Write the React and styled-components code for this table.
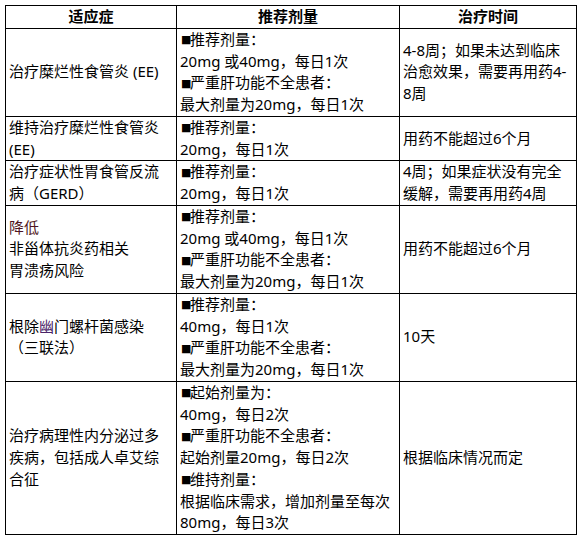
import React from "react";
import styled, { createGlobalStyle } from "styled-components";

const Global = createGlobalStyle`
  html, body { margin: 0; padding: 0; background: #fff; }
  body { font-family: "Noto Sans", "Noto Sans CJK SC", sans-serif; color: #000; }
`;

const Page = styled.div`
  padding: 5px;
`;

const Table = styled.div`
  display: grid;
  grid-template-columns: 170px 222px 176px;
  gap: 1px;
  padding: 1px;
  background: #000;
  width: max-content;
  font-size: 15px;
  line-height: 21.75px;
`;

const Cell = styled.div`
  background: #fff;
  display: flex;
  flex-direction: column;
  justify-content: center;
  align-items: ${(p) => (p.$head ? "center" : "flex-start")};
  padding: 0 3px;
  font-weight: ${(p) => (p.$head ? 700 : 400)};
  white-space: nowrap;
`;

const Line = styled.div`
  height: 21.75px;
  display: flex;
  align-items: center;
`;

const Bullet = styled.span`
  font-family: "DejaVu Sans", sans-serif;
  font-size: 11px;
  line-height: 1;
  display: inline-block;
  width: 9px;
  margin-left: 1px;
`;

const Tint = styled.span`
  color: ${(p) => p.$c};
`;

const rows = [
  {
    ind: ["治疗糜烂性食管炎 (EE)"],
    dose: ["■推荐剂量：", "20mg 或40mg，每日1次", "■严重肝功能不全患者：", "最大剂量为20mg，每日1次"],
    time: ["4-8周；如果未达到临床", "治愈效果，需要再用药4-", "8周"],
  },
  {
    ind: ["维持治疗糜烂性食管炎", "(EE)"],
    dose: ["■推荐剂量：", "20mg，每日1次"],
    time: ["用药不能超过6个月"],
  },
  {
    ind: ["治疗症状性胃食管反流", "病（GERD）"],
    dose: ["■推荐剂量：", "20mg，每日1次"],
    time: ["4周；如果症状没有完全", "缓解，需要再用药4周"],
  },
  {
    ind: [<Tint $c="#4e1420">降低</Tint>, "非甾体抗炎药相关", "胃溃疡风险"],
    dose: ["■推荐剂量：", "20mg 或40mg，每日1次", "■严重肝功能不全患者：", "最大剂量为20mg，每日1次"],
    time: ["用药不能超过6个月"],
  },
  {
    ind: [
      <span>
        根除<Tint $c="#4a2468">幽</Tint>门螺杆菌感染
      </span>,
      "（三联法）",
    ],
    dose: ["■推荐剂量：", "40mg，每日1次", "■严重肝功能不全患者：", "最大剂量为20mg，每日1次"],
    time: ["10天"],
  },
  {
    ind: ["治疗病理性内分泌过多", "疾病，包括成人卓艾综", "合征"],
    dose: [
      "■起始剂量为：",
      "40mg，每日2次",
      "■严重肝功能不全患者：",
      "起始剂量20mg，每日2次",
      "■维持剂量：",
      "根据临床需求，增加剂量至每次",
      "80mg，每日3次",
    ],
    time: ["根据临床情况而定"],
  },
];

function renderLine(l, i) {
  if (typeof l === "string" && l.startsWith("■")) {
    return (
      <Line key={i}>
        <Bullet>■</Bullet>
        <span>{l.slice(1)}</span>
      </Line>
    );
  }
  return <Line key={i}>{l}</Line>;
}

export default function App() {
  return (
    <Page>
      <Global />
      <Table>
        <Cell $head>适应症</Cell>
        <Cell $head>推荐剂量</Cell>
        <Cell $head>治疗时间</Cell>
        {rows.map((r, i) => (
          <React.Fragment key={i}>
            <Cell>{r.ind.map(renderLine)}</Cell>
            <Cell>{r.dose.map(renderLine)}</Cell>
            <Cell>{r.time.map(renderLine)}</Cell>
          </React.Fragment>
        ))}
      </Table>
    </Page>
  );
}
